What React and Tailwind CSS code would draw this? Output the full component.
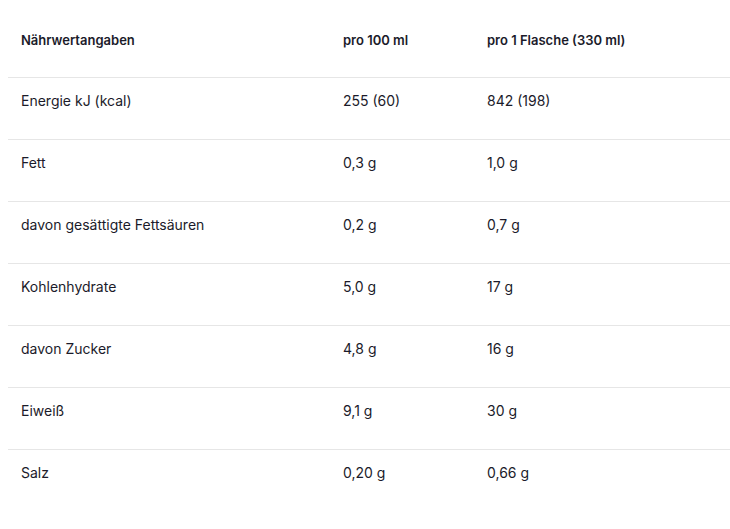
import React from "react";

const rows = [
  ["Energie kJ (kcal)", "255 (60)", "842 (198)"],
  ["Fett", "0,3 g", "1,0 g"],
  ["davon gesättigte Fettsäuren", "0,2 g", "0,7 g"],
  ["Kohlenhydrate", "5,0 g", "17 g"],
  ["davon Zucker", "4,8 g", "16 g"],
  ["Eiweiß", "9,1 g", "30 g"],
  ["Salz", "0,20 g", "0,66 g"],
];

function Row({ cells, head = false, last = false }) {
  return (
    <div
      className={`grid grid-cols-[322px_144px_1fr] h-[62px] ${
        last ? "" : "border-b border-[#e6e6e6]"
      } ${head ? "pt-[14px] font-semibold text-[13px]" : "pt-[13px] text-[14px]"}`}
    >
      {cells.map((c, i) => (
        <div key={i} className="px-[13px] leading-5">
          {c}
        </div>
      ))}
    </div>
  );
}

export default function App() {
  return (
    <div
      className="w-[730px] h-[529px] bg-white pl-[8px] pt-[16px] text-[#1b1b2a] overflow-hidden"
      style={{ fontFamily: "Inter, 'Noto Sans', sans-serif" }}
    >
      <Row head cells={["Nährwertangaben", "pro 100 ml", "pro 1 Flasche (330 ml)"]} />
      {rows.map((r, i) => (
        <Row key={i} cells={r} last={i === rows.length - 1} />
      ))}
    </div>
  );
}
